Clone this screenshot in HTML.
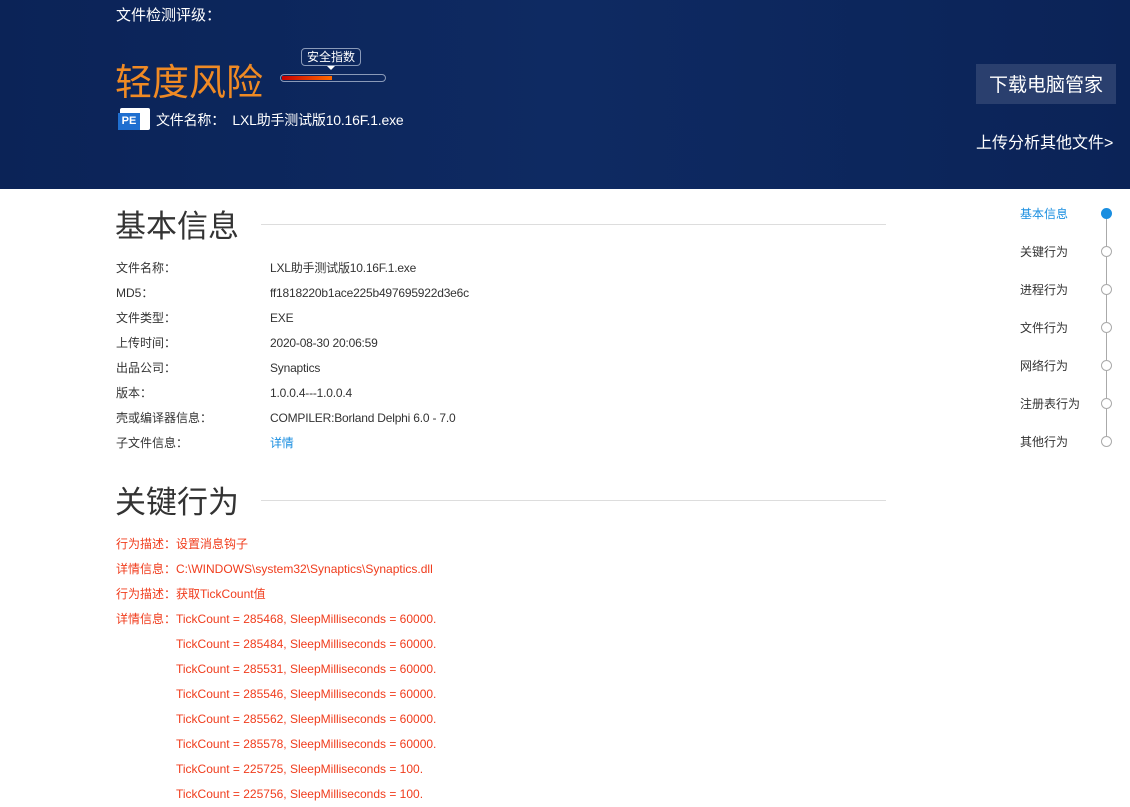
<!DOCTYPE html>
<html><head><meta charset="utf-8"><style>
*{margin:0;padding:0;box-sizing:border-box}
body{width:1130px;height:807px;overflow:hidden;background:#fff;font-family:"Liberation Sans","Noto Sans CJK SC",sans-serif;position:relative}
.hd{position:absolute;left:0;top:0;width:1130px;height:189px;background:linear-gradient(90deg,#0b2357,#0e2a62 50%,#0b2357)}
.a{position:absolute;white-space:nowrap}
.k{font-size:12px;color:#333}
.r{font-size:12px;color:#f03c1c}
.nav{font-size:12px;color:#333}
.dot{position:absolute;left:1101px;width:11px;height:11px;border-radius:50%;border:1px solid #aaa;background:#fff}
</style></head><body>
<div class="hd"></div>
<div class="a" style="left:116px;top:4px;color:#fff;font-size:15px">文件检测评级：</div>
<div class="a" style="left:115px;top:52px;color:#f08a24;font-size:37px">轻度风险</div>
<div class="a" style="left:301px;top:48px;width:60px;height:18px;border:1px solid #8a9ab8;border-radius:4px;color:#fff;font-size:12px;text-align:center;line-height:16px">安全指数</div>
<div class="a" style="left:327px;top:66px;width:0;height:0;border-left:4px solid transparent;border-right:4px solid transparent;border-top:4px solid #fff"></div>
<div class="a" style="left:280px;top:74px;width:106px;height:8px;border:1px solid #8a9ab8;border-radius:4px"></div>
<div class="a" style="left:282px;top:76px;width:50px;height:4px;background:linear-gradient(90deg,#c80000,#ff6a00)"></div>
<div class="a" style="left:120px;top:108px;width:30px;height:22px;background:#fff;border-radius:2px"></div>
<div class="a" style="left:118px;top:113px;width:22px;height:17px;background:#1f6fd0;color:#fff;font-size:11px;font-weight:bold;text-align:center;line-height:17px">PE</div>
<div class="a" style="left:156px;top:110px;color:#fff;font-size:14px;letter-spacing:-0.2px">文件名称：&nbsp;&nbsp;LXL助手测试版10.16F.1.exe</div>
<div class="a" style="left:976px;top:64px;width:140px;height:40px;background:#2a3f6e;color:#fff;font-size:19px;text-align:center;line-height:44px">下载电脑管家</div>
<div class="a" style="left:976px;top:129px;color:#fff;font-size:16px">上传分析其他文件&gt;</div>

<div class="a" style="left:115px;top:201px;color:#333;font-size:31px">基本信息</div>
<div class="a" style="left:261px;top:224px;width:625px;height:1px;background:#ddd"></div>
<div class="a k" style="left:116px;top:256px;line-height:25px">文件名称：<br>MD5：<br>文件类型：<br>上传时间：<br>出品公司：<br>版本：<br>壳或编译器信息：<br>子文件信息：</div>
<div class="a k" style="left:270px;top:256px;line-height:25px;letter-spacing:-0.2px">LXL助手测试版10.16F.1.exe<br>ff1818220b1ace225b497695922d3e6c<br>EXE<br>2020-08-30 20:06:59<br>Synaptics<br>1.0.0.4---1.0.0.4<br>COMPILER:Borland Delphi 6.0 - 7.0<br><span style="color:#1a8ee0">详情</span></div>

<div class="a" style="left:115px;top:477px;color:#333;font-size:31px">关键行为</div>
<div class="a" style="left:261px;top:500px;width:625px;height:1px;background:#ddd"></div>
<div class="a r" style="left:116px;top:532px;line-height:25px">行为描述：设置消息钩子<br>详情信息：C:\WINDOWS\system32\Synaptics\Synaptics.dll<br>行为描述：获取TickCount值<br>详情信息：TickCount = 285468, SleepMilliseconds = 60000.</div>
<div class="a r" style="left:176px;top:632px;line-height:25px">TickCount = 285484, SleepMilliseconds = 60000.<br>TickCount = 285531, SleepMilliseconds = 60000.<br>TickCount = 285546, SleepMilliseconds = 60000.<br>TickCount = 285562, SleepMilliseconds = 60000.<br>TickCount = 285578, SleepMilliseconds = 60000.<br>TickCount = 225725, SleepMilliseconds = 100.<br>TickCount = 225756, SleepMilliseconds = 100.</div>

<div class="a" style="left:1106px;top:214px;width:1px;height:228px;background:#aaa"></div>
<div class="a nav" style="left:1020px;top:195px;line-height:38px"><span style="color:#1a8ee0">基本信息</span><br>关键行为<br>进程行为<br>文件行为<br>网络行为<br>注册表行为<br>其他行为</div>
<div class="dot" style="top:208px;background:#1a8ee0;border-color:#1a8ee0"></div>
<div class="dot" style="top:246px"></div>
<div class="dot" style="top:284px"></div>
<div class="dot" style="top:322px"></div>
<div class="dot" style="top:360px"></div>
<div class="dot" style="top:398px"></div>
<div class="dot" style="top:436px"></div>
</body></html>
